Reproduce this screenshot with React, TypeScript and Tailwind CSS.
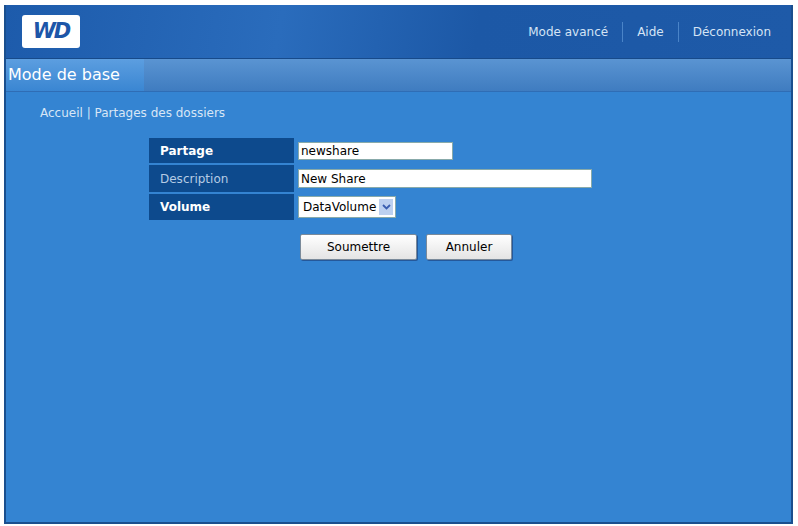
import React from "react";

export default function App() {
  const f = { fontFamily: "Verdana, 'DejaVu Sans', sans-serif" };
  return (
    <div className="w-[798px] h-[526px] bg-white pt-[5px] pl-[4px]" style={f}>
      <div className="w-[789px] h-[519px] border-2 border-[#1a4f8e] border-t-0 flex flex-col bg-[#3484d2]">
        <div className="h-[54px] bg-[linear-gradient(100deg,#1d5bab_0%,#2a6cbc_35%,#1c58a6_60%,#1e5aa8_100%)] flex items-center justify-between pl-[16px] pr-[20px] border-b border-[#174a8a]">
          <div className="w-[58px] h-[33px] bg-white rounded-[3px] flex items-center justify-center">
            <span className="text-[#1d56a8] font-bold italic text-[21px] tracking-[-2px] leading-none" style={{ fontFamily: "'DejaVu Sans', sans-serif" }}>WD</span>
          </div>
          <div className="flex items-center text-[12px] text-[#d5e4f5]">
            <span>Mode avancé</span>
            <span className="mx-[14px] w-px h-[20px] bg-[#4a84c8]" />
            <span>Aide</span>
            <span className="mx-[14px] w-px h-[20px] bg-[#4a84c8]" />
            <span>Déconnexion</span>
          </div>
        </div>
        <div className="h-[33px] flex bg-[linear-gradient(#5a94d2,#3f7cc0)] border-b border-[#2f6db5]">
          <div className="w-[138px] bg-[linear-gradient(#5c9ee0,#3a86d2)] text-white text-[16px] flex items-center pl-[2px]">Mode de base</div>
        </div>
        <div className="pl-[34px] pt-[12px] text-[12px] text-[#d8e6f6]">Accueil | Partages des dossiers</div>
        <div className="ml-[143px] mt-[16px] text-[12px]">
          <div className="flex items-center h-[25px]">
            <div className="w-[145px] h-full bg-[#0d4a8d] text-white font-bold flex items-center pl-[11px]">Partage</div>
            <div className="ml-[4px] w-[155px] h-[18px] bg-white border border-[#8aa] text-black flex items-center pl-[2px]">newshare</div>
          </div>
          <div className="flex items-center h-[27px] mt-[2px]">
            <div className="w-[145px] h-full bg-[#0d4a8d] text-[#b5cbe4] flex items-center pl-[11px]">Description</div>
            <div className="ml-[4px] w-[294px] h-[19px] bg-white border border-[#8aa] text-black flex items-center pl-[2px]">New Share</div>
          </div>
          <div className="flex items-center h-[26px] mt-[2px]">
            <div className="w-[145px] h-full bg-[#0d4a8d] text-white font-bold flex items-center pl-[11px]">Volume</div>
            <div className="ml-[4px] h-[22px] bg-white border border-[#8aa] text-black flex items-center pl-[4px] pr-[2px] gap-[3px]">
              DataVolume
              <span className="w-[14px] h-[16px] bg-[#bcd0f0] flex items-center justify-center">
                <svg width="9" height="6" viewBox="0 0 9 6"><path d="M1 1l3.5 3.5L8 1" stroke="#3a5eb0" strokeWidth="1.8" fill="none" /></svg>
              </span>
            </div>
          </div>
          <div className="flex ml-[151px] mt-[14px] gap-[9px]">
            <button className="w-[117px] h-[26px] bg-[linear-gradient(#ffffff,#e4e4e4)] border border-[#7a8a9a] rounded-[2px] text-[12px] text-black shadow-[1px_1px_0_#25589a]">Soumettre</button>
            <button className="w-[86px] h-[26px] bg-[linear-gradient(#ffffff,#e4e4e4)] border border-[#7a8a9a] rounded-[2px] text-[12px] text-black shadow-[1px_1px_0_#25589a]">Annuler</button>
          </div>
        </div>
      </div>
    </div>
  );
}
